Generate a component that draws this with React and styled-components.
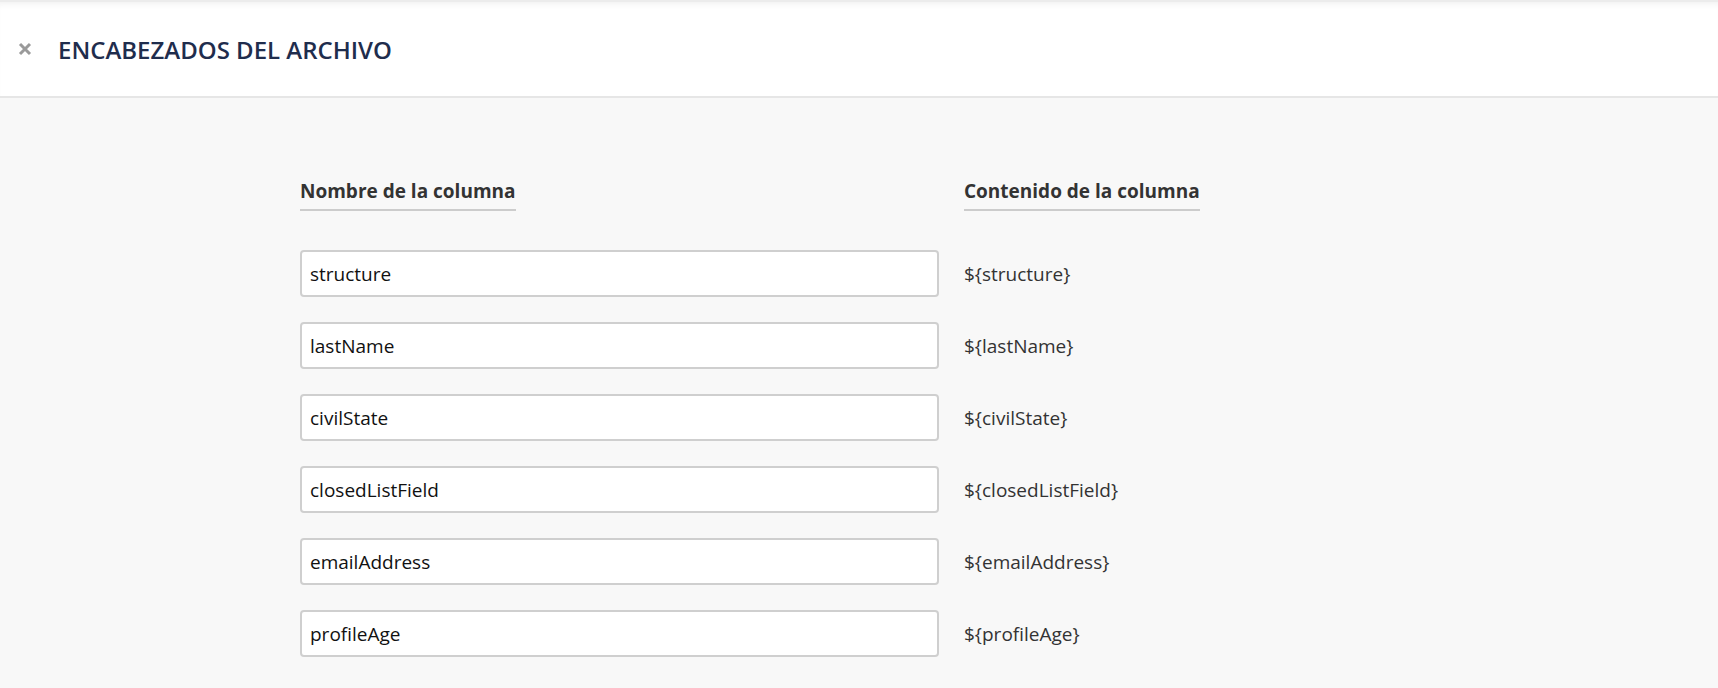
import React from 'react';
import styled, { createGlobalStyle } from 'styled-components';

const GlobalStyle = createGlobalStyle`
  html, body {
    margin: 0;
    padding: 0;
    background: #f8f8f8;
    font-family: "Open Sans", "Liberation Sans", sans-serif;
  }
`;

const Page = styled.div`
  min-height: 688px;
  background: #f8f8f8;
`;

const Header = styled.header`
  display: flex;
  align-items: center;
  height: 94px;
  padding-left: 16px;
  background: #fff;
  border-top: 2px solid #ececec;
  border-bottom: 2px solid #e6e6e6;
  box-shadow: inset 0 6px 6px -4px rgba(0, 0, 0, 0.06);
`;

const CloseButton = styled.button`
  display: flex;
  align-items: center;
  justify-content: center;
  width: 18px;
  height: 18px;
  padding: 0;
  margin-right: 24px;
  border: none;
  background: none;
  cursor: pointer;
`;

const Title = styled.h1`
  margin: 0;
  font-size: 24px;
  font-weight: 600;
  color: #1f2d4d;
`;

const Body = styled.main`
  padding: 80px 0 0 300px;
`;

const Grid = styled.div`
  display: grid;
  grid-template-columns: 639px auto;
  column-gap: 25px;
  row-gap: 25px;
  align-items: center;
  justify-content: start;
`;

const HeadCell = styled.div`
  padding-bottom: 14px;
`;

const ColumnLabel = styled.span`
  display: inline-block;
  font-size: 19px;
  font-weight: 700;
  color: #333;
  padding-bottom: 5px;
  border-bottom: 2px solid #ccc;
`;

const NameInput = styled.input`
  box-sizing: border-box;
  width: 100%;
  height: 47px;
  padding: 0 8px;
  border: 2px solid #cfcfcf;
  border-radius: 4px;
  background: #fff;
  font-family: "Open Sans", "Liberation Sans", sans-serif;
  font-size: 19px;
  color: #111;
  outline: none;
`;

const ContentValue = styled.span`
  font-size: 19px;
  color: #333;
`;

const fields = ['structure', 'lastName', 'civilState', 'closedListField', 'emailAddress', 'profileAge'];

function CloseIcon() {
  return (
    <svg width="14" height="14" viewBox="0 0 14 14">
      <path d="M2 2 L12 12 M12 2 L2 12" stroke="#9a9a9a" strokeWidth="3" strokeLinecap="butt" />
    </svg>
  );
}

export default function App() {
  return (
    <Page>
      <GlobalStyle />
      <Header>
        <CloseButton aria-label="Cerrar"><CloseIcon /></CloseButton>
        <Title>ENCABEZADOS DEL ARCHIVO</Title>
      </Header>
      <Body>
        <Grid>
          <HeadCell><ColumnLabel>Nombre de la columna</ColumnLabel></HeadCell>
          <HeadCell><ColumnLabel>Contenido de la columna</ColumnLabel></HeadCell>
          {fields.map(f => (
            <React.Fragment key={f}>
              <NameInput defaultValue={f} />
              <ContentValue>{'${' + f + '}'}</ContentValue>
            </React.Fragment>
          ))}
        </Grid>
      </Body>
    </Page>
  );
}
